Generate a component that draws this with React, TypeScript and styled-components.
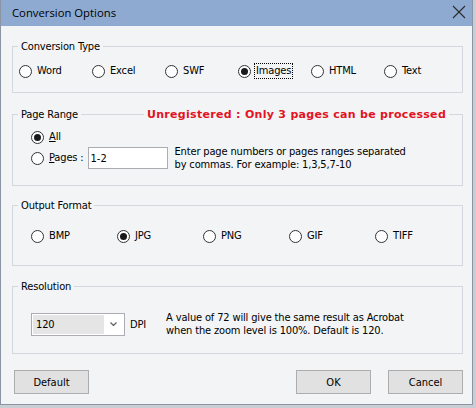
import styled, { createGlobalStyle } from 'styled-components'
import { ReactNode } from 'react'

const GlobalStyle = createGlobalStyle`
  html, body {
    margin: 0;
    padding: 0;
    background: #c9ced5;
  }
  body {
    font-family: "DejaVu Sans Condensed", "DejaVu Sans", sans-serif;
    font-stretch: semi-condensed;
    font-size: 11px;
    letter-spacing: -0.15px;
    color: #000;
  }
`

const BODY_BG = '#f2f4f6'

type RadioProps = {
  label: ReactNode
  checked?: boolean
  focused?: boolean
}

function Radio ({ label, checked, focused }: RadioProps) {
  return (
    <RadioLabel>
      <RadioCircle $checked={!!checked} />
      <RadioText $focused={!!focused}>{label}</RadioText>
    </RadioLabel>
  )
}

type GroupProps = {
  title: string
  note?: string
  children?: ReactNode
  $pad: string
  $gap: number
}

function Group ({ title, note, children, $pad, $gap }: GroupProps) {
  return (
    <GroupBox $pad={$pad} $gap={$gap}>
      <GroupTitle>{title}</GroupTitle>
      {note && <GroupNote>{note}</GroupNote>}
      {children}
    </GroupBox>
  )
}

export default function App () {
  return (
    <>
      <GlobalStyle />
      <Window>
        <TitleBar>
          <TitleText>Conversion Options</TitleText>
          <CloseIcon width="14" height="14" viewBox="0 0 14 14">
            <path d="M1 1 L13 13 M13 1 L1 13" stroke="#2b2b2b" strokeWidth="1.1" fill="none" />
          </CloseIcon>
        </TitleBar>
        <Body>
          <Group title="Conversion Type" $pad="16px 0 13px 6px" $gap={21}>
            <RadioGrid $col={73} $count={6}>
              <Radio label="Word" />
              <Radio label="Excel" />
              <Radio label="SWF" />
              <Radio label="Images" checked focused />
              <Radio label="HTML" />
              <Radio label="Text" />
            </RadioGrid>
          </Group>

          <Group
            title="Page Range"
            note="Unregistered : Only 3 pages can be processed"
            $pad="14px 0 14px 18px"
            $gap={19}
          >
            <RangeRows>
              <Radio label={<><u>A</u>ll</>} checked />
              <PagesRow>
                <Radio label={<><u>P</u>ages :</>} />
                <PagesInput defaultValue="1-2" />
                <HelpText>
                  Enter page numbers or pages ranges separated<br />
                  by commas. For example: 1,3,5,7-10
                </HelpText>
              </PagesRow>
            </RangeRows>
          </Group>

          <Group title="Output Format" $pad="22px 0 21px 18px" $gap={20}>
            <RadioGrid $col={86} $count={5}>
              <Radio label="BMP" />
              <Radio label="JPG" checked />
              <Radio label="PNG" />
              <Radio label="GIF" />
              <Radio label="TIFF" />
            </RadioGrid>
          </Group>

          <Group title="Resolution" $pad="24px 0 16px 18px" $gap={16}>
            <ResolutionRow>
              <Combo>
                <ComboValue>120</ComboValue>
                <ComboArrow>
                  <svg width="7" height="4" viewBox="0 0 7 4">
                    <path d="M0.5 0.5 L3.5 3.5 L6.5 0.5" stroke="#606060" strokeWidth="1.2" fill="none" />
                  </svg>
                </ComboArrow>
              </Combo>
              <DpiLabel>DPI</DpiLabel>
              <HelpText>
                A value of 72 will give the same result as Acrobat<br />
                when the zoom level is 100%. Default is 120.
              </HelpText>
            </ResolutionRow>
          </Group>

          <ButtonRow>
            <Button>Default</Button>
            <Spacer />
            <Button>OK</Button>
            <Button>Cancel</Button>
          </ButtonRow>
        </Body>
      </Window>
    </>
  )
}

const Window = styled.div`
  width: 471px;
  height: 404px;
  border: 1px solid #8a94a3;
  border-top: none;
  background: ${BODY_BG};
  display: flex;
  flex-direction: column;
`

const TitleBar = styled.div`
  height: 26px;
  background: #8eaad0;
  display: flex;
  align-items: center;
  padding: 0 6px 2px 11px;
  box-sizing: border-box;
`

const TitleText = styled.span`
  flex: 1;
  font-family: "Open Sans", "Noto Sans", sans-serif;
  font-stretch: normal;
  font-size: 11.3px;
  letter-spacing: 0;
  color: #000;
`

const CloseIcon = styled.svg`
  display: block;
`

const Body = styled.div`
  flex: 1;
  padding: 20px 9px 0 11px;
  display: flex;
  flex-direction: column;
`

const GroupBox = styled.div<{ $pad: string, $gap: number }>`
  position: relative;
  border: 1px solid #d3d8de;
  padding: ${p => p.$pad};
  margin-bottom: ${p => p.$gap}px;
`

const GroupTitle = styled.span`
  position: absolute;
  top: -8px;
  left: 5px;
  padding: 0 3px;
  line-height: 15px;
  background: ${BODY_BG};
`

const GroupNote = styled.span`
  position: absolute;
  top: -8px;
  left: 131px;
  padding: 0 3px;
  line-height: 15px;
  font-family: "DejaVu Sans", sans-serif;
  font-stretch: normal;
  font-weight: bold;
  letter-spacing: 0.3px;
  color: #e2141f;
  background: ${BODY_BG};
`

const RadioGrid = styled.div<{ $col: number, $count: number }>`
  display: grid;
  grid-template-columns: repeat(${p => p.$count}, ${p => p.$col}px);
  height: 16px;
  align-items: center;
`

const RadioLabel = styled.label`
  display: inline-flex;
  align-items: center;
  gap: 4px;
  height: 16px;
  white-space: nowrap;
`

const RadioCircle = styled.span<{ $checked: boolean }>`
  width: 13px;
  height: 13px;
  box-sizing: border-box;
  border-radius: 50%;
  border: 1px solid #333;
  background: #fff;
  display: flex;
  align-items: center;
  justify-content: center;

  &::after {
    content: '';
    display: ${p => (p.$checked ? 'block' : 'none')};
    width: 7px;
    height: 7px;
    border-radius: 50%;
    background: #1a1a1a;
  }
`

const RadioText = styled.span<{ $focused: boolean }>`
  padding: 0 1px;
  line-height: 14px;
  outline: ${p => (p.$focused ? '1px dotted #000' : 'none')};
`

const RangeRows = styled.div`
  display: flex;
  flex-direction: column;
`

const PagesRow = styled.div`
  display: flex;
  align-items: center;
  height: 26px;
`

const PagesInput = styled.input`
  width: 80px;
  height: 22px;
  box-sizing: border-box;
  margin: 0 7px 0 3px;
  border: 1px solid #abadb3;
  background: #fff;
  padding: 0 2px;
  font: inherit;
  font-size: 11px;
  color: #000;
  outline: none;
`

const HelpText = styled.div`
  line-height: 13px;
  white-space: nowrap;
`

const ResolutionRow = styled.div`
  display: flex;
  align-items: center;
`

const Combo = styled.div`
  width: 94px;
  height: 23px;
  box-sizing: border-box;
  border: 1px solid #abadb3;
  background: #fff;
  display: flex;
  padding: 1px;
`

const ComboValue = styled.div`
  flex: 1;
  background: #e5e5e5;
  padding-left: 3px;
  line-height: 19px;
`

const ComboArrow = styled.div`
  width: 19px;
  display: flex;
  align-items: center;
  justify-content: center;
`

const DpiLabel = styled.span`
  margin: 0 20px 0 5px;
`

const ButtonRow = styled.div`
  display: flex;
  gap: 17px;
  padding: 0 0 0 2px;
`

const Spacer = styled.div`
  flex: 1;
`

const Button = styled.button`
  width: 75px;
  height: 24px;
  border: 1px solid #adadad;
  background: #e1e1e1;
  font: inherit;
  font-size: 11px;
  color: #000;
  padding: 0;
`
